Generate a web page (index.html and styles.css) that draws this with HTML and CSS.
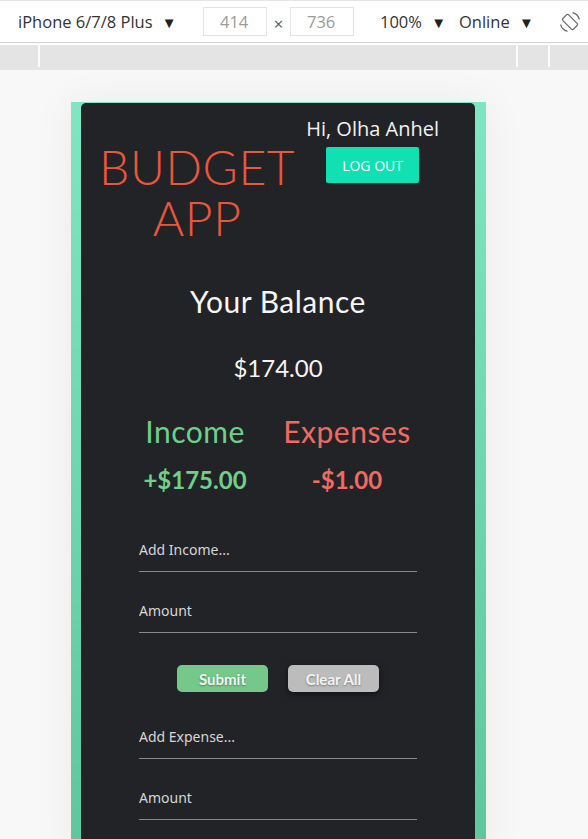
FILE: index.html
```html
<!DOCTYPE html>
<html lang="en">
<head>
<meta charset="utf-8">
<title>Budget App</title>
<link rel="stylesheet" href="styles.css">
</head>
<body>
<div class="devtools">
  <div class="toolbar">
    <span class="device-name">iPhone 6/7/8 Plus <span class="caret">▼</span></span>
    <span class="dims">
      <span class="dim-box">414</span>
      <span class="times">×</span>
      <span class="dim-box">736</span>
    </span>
    <span class="zoom">100% <span class="caret">▼</span></span>
    <span class="network">Online <span class="caret">▼</span></span>
    <svg class="rotate" width="22" height="22" viewBox="0 0 22 22" fill="none" stroke="#666" stroke-width="1.2">
      <rect x="7" y="3.5" width="8" height="15" rx="1.5" transform="rotate(-45 11 11)"/>
      <path d="M13.5 1.6 A9.6 9.6 0 0 1 20.4 8.5"/>
      <path d="M8.5 20.4 A9.6 9.6 0 0 1 1.6 13.5"/>
    </svg>
  </div>
  <div class="ruler">
    <span class="gap g1"></span><span class="tick"></span>
    <span class="gap g2"></span><span class="tick"></span>
    <span class="gap g3"></span><span class="tick"></span>
  </div>
</div>

<div class="stage">
  <div class="device">
    <main class="app">
      <header class="app-header">
        <h1 class="logo"><span class="logo-line">BUDGET</span><span class="logo-line">APP</span></h1>
        <div class="user">
          <p class="greeting">Hi, Olha Anhel</p>
          <button class="logout">LOG OUT</button>
        </div>
      </header>

      <section class="balance">
        <h2 class="balance-title">Your Balance</h2>
        <p class="balance-value">$174.00</p>
      </section>

      <section class="summary">
        <div class="col income">
          <h3 class="col-title">Income</h3>
          <p class="col-value">+$175.00</p>
        </div>
        <div class="col expense">
          <h3 class="col-title">Expenses</h3>
          <p class="col-value">-$1.00</p>
        </div>
      </section>

      <form class="entry">
        <input class="field" type="text" placeholder="Add Income...">
        <input class="field" type="text" placeholder="Amount">
        <div class="actions">
          <button type="button" class="btn submit">Submit</button>
          <button type="button" class="btn clear">Clear All</button>
        </div>
        <input class="field" type="text" placeholder="Add Expense...">
        <input class="field" type="text" placeholder="Amount">
      </form>
    </main>
  </div>
</div>
</body>
</html>
```

FILE: styles.css
```css
* { box-sizing: border-box; }

html, body {
  margin: 0;
  padding: 0;
  height: 100%;
  overflow: hidden;
}

body {
  background: #f8f8f8;
  font-family: "Open Sans", "Noto Sans", sans-serif;
}

/* ---------- devtools chrome ---------- */
.devtools {
  background: #ffffff;
}

.toolbar {
  height: 43px;
  display: flex;
  align-items: center;
  border-top: 1px solid #e6e6e6;
  border-bottom: 1px solid #cfcfcf;
  padding-left: 18px;
  font-size: 16.5px;
  color: #333;
}

.caret {
  font-size: 15px;
  margin-left: 5px;
  color: #222;
}

.device-name { width: 185px; }

.dims {
  display: flex;
  align-items: center;
}

.dim-box {
  width: 64px;
  height: 29px;
  border: 1px solid #e3e3e3;
  color: #9a9a9a;
  display: flex;
  align-items: center;
  padding-left: 16px;
}

.times {
  width: 23px;
  text-align: center;
  color: #555;
  padding-top: 4px;
}

.zoom { margin-left: 26px; width: 79px; }
.network { width: 88px; }

.rotate { margin-left: 12px; }

.ruler {
  height: 27px;
  background: #e4e4e4;
  border-top: 2px solid #fff;
  display: flex;
}

.gap { display: block; }
.g1 { width: 38px; }
.g2 { width: 476px; }
.g3 { width: 30px; }

.tick {
  display: block;
  width: 2px;
  height: 22px;
  background: #fbfbfb;
}

/* ---------- stage ---------- */
.stage {
  padding-top: 32px;
  display: flex;
  justify-content: center;
  padding-right: 31px;
}

.device {
  width: 415px;
  height: 760px;
  padding: 1px 11px 0 10px;
  background: linear-gradient(180deg, #7fe6c1 0%, #5fc59c 100%);
  box-shadow: 0 0 40px rgba(0, 0, 0, 0.06);
}

.app {
  height: 100%;
  background: #222327;
  border-radius: 5px 5px 0 0;
  padding: 14px 0 0;
  color: #eee;
}

/* ---------- header ---------- */
.app-header {
  display: flex;
  align-items: flex-start;
}

.logo {
  margin: 24px 0 0 18px;
  font-family: "Lato", sans-serif;
  font-weight: 300;
  font-size: 48px;
  letter-spacing: 0.6px;
  color: #e9573c;
  text-align: center;
  display: flex;
  flex-direction: column;
}

.logo-line {
  display: block;
  height: 51px;
  line-height: 51px;
}

.user {
  margin-left: auto;
  margin-right: 36px;
  display: flex;
  flex-direction: column;
  align-items: center;
}

.greeting {
  margin: 0;
  font-family: "Open Sans", sans-serif;
  font-size: 20px;
  line-height: 24px;
  color: #f2f2f2;
}

.logout {
  margin-top: 6px;
  width: 93px;
  height: 36px;
  border: none;
  border-radius: 2px;
  background: #10e0b2;
  color: #fff;
  font-family: "Open Sans", sans-serif;
  font-size: 14px;
  padding: 0;
}

/* ---------- balance ---------- */
.balance {
  text-align: center;
  margin-top: 39px;
}

.balance-title {
  margin: 0;
  font-family: "Lato", sans-serif;
  font-weight: 400;
  font-size: 30px;
  line-height: 38px;
  letter-spacing: 0.5px;
  color: #f5f5f5;
}

.balance-value {
  margin: 33px 0 0;
  font-family: "Lato", sans-serif;
  font-size: 24px;
  line-height: 30px;
  color: #f5f5f5;
}

/* ---------- summary ---------- */
.summary {
  margin-top: 30px;
  display: flex;
  justify-content: center;
  gap: 18px;
  padding-right: 14px;
}

.col {
  width: 134px;
  text-align: center;
}

.col-title {
  margin: 0;
  font-family: "Lato", sans-serif;
  font-weight: 400;
  font-size: 30px;
  line-height: 36px;
  letter-spacing: 0.5px;
}

.col-value {
  margin: 17px 0 0;
  font-family: "Lato", sans-serif;
  font-weight: 700;
  font-size: 24px;
  line-height: 28px;
}

.income { color: #70cf8b; }
.expense { color: #f06a62; }

/* ---------- form ---------- */
.entry {
  margin-top: 42px;
  display: flex;
  flex-direction: column;
  align-items: center;
}

.field {
  width: 278px;
  height: 36px;
  margin-bottom: 25px;
  background: transparent;
  border: none;
  border-bottom: 1px solid #8a8a8a;
  color: #ddd;
  font-family: "Noto Sans", "DejaVu Sans", sans-serif;
  font-size: 14px;
  padding: 0 0 8px;
  outline: none;
}

.field::placeholder {
  color: #d6d6d6;
  opacity: 1;
}

.actions {
  display: flex;
  gap: 20px;
  margin: 7px 0 31px;
}

.btn {
  width: 91px;
  height: 27px;
  border: none;
  border-radius: 5px;
  font-family: "Lato", sans-serif;
  font-weight: 700;
  font-size: 15px;
  color: #f4f4f4;
  text-shadow: 0 1px 2px rgba(0, 0, 0, 0.35);
  padding: 0;
}

.submit { background: #74c98a; }
.clear {
  background: #bcbcbc;
  box-shadow: 0 2px 6px rgba(0, 0, 0, 0.5);
}
```
